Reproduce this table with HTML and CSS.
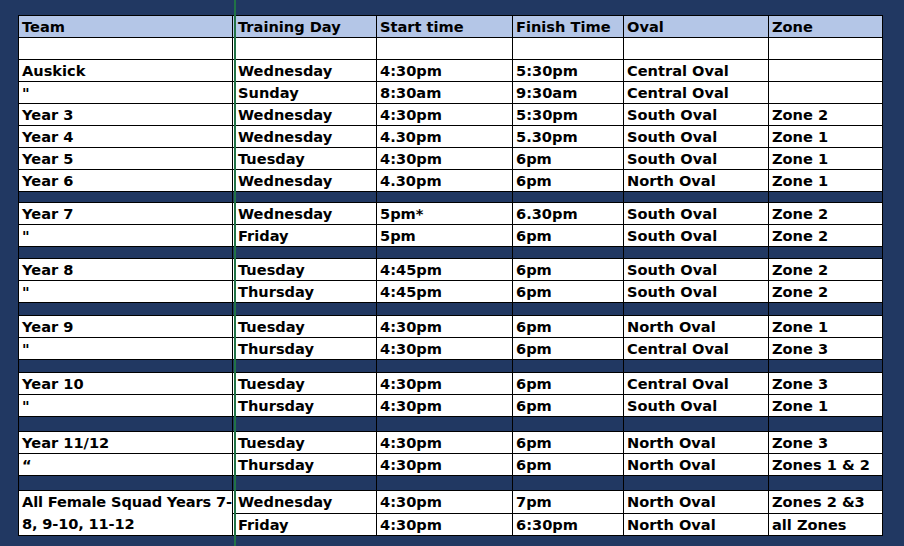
FILE: index.html
```html
<!DOCTYPE html>
<html lang="en">
<head>
<meta charset="utf-8">
<title>Training Schedule</title>
<link rel="stylesheet" href="styles.css">
</head>
<body>
<div class="sheet">
  <table class="schedule">
    <colgroup>
      <col class="c-team"><col class="c-day"><col class="c-start"><col class="c-finish"><col class="c-oval"><col class="c-zone">
    </colgroup>
    <thead>
      <tr class="head"><th>Team</th><th class="day">Training Day</th><th>Start time</th><th>Finish Time</th><th>Oval</th><th>Zone</th></tr>
    </thead>
    <tbody>
      <tr><td></td><td class="day"></td><td></td><td></td><td></td><td></td></tr>
      <tr><td>Auskick</td><td class="day">Wednesday</td><td>4:30pm</td><td>5:30pm</td><td>Central Oval</td><td></td></tr>
      <tr><td>"</td><td class="day">Sunday</td><td>8:30am</td><td>9:30am</td><td>Central Oval</td><td></td></tr>
      <tr><td>Year 3</td><td class="day">Wednesday</td><td>4:30pm</td><td>5:30pm</td><td>South Oval</td><td>Zone 2</td></tr>
      <tr><td>Year 4</td><td class="day">Wednesday</td><td>4.30pm</td><td>5.30pm</td><td>South Oval</td><td>Zone 1</td></tr>
      <tr><td>Year 5</td><td class="day">Tuesday</td><td>4:30pm</td><td>6pm</td><td>South Oval</td><td>Zone 1</td></tr>
      <tr><td>Year 6</td><td class="day">Wednesday</td><td>4.30pm</td><td>6pm</td><td>North Oval</td><td>Zone 1</td></tr>
      <tr class="sep sep-11"><td></td><td></td><td></td><td></td><td></td><td></td></tr>
      <tr><td>Year 7</td><td class="day">Wednesday</td><td>5pm*</td><td>6.30pm</td><td>South Oval</td><td>Zone 2</td></tr>
      <tr><td>"</td><td class="day">Friday</td><td>5pm</td><td>6pm</td><td>South Oval</td><td>Zone 2</td></tr>
      <tr class="sep sep-12"><td></td><td></td><td></td><td></td><td></td><td></td></tr>
      <tr><td>Year 8</td><td class="day">Tuesday</td><td>4:45pm</td><td>6pm</td><td>South Oval</td><td>Zone 2</td></tr>
      <tr><td>"</td><td class="day">Thursday</td><td>4:45pm</td><td>6pm</td><td>South Oval</td><td>Zone 2</td></tr>
      <tr class="sep sep-13"><td></td><td></td><td></td><td></td><td></td><td></td></tr>
      <tr><td>Year 9</td><td class="day">Tuesday</td><td>4:30pm</td><td>6pm</td><td>North Oval</td><td>Zone 1</td></tr>
      <tr><td>"</td><td class="day">Thursday</td><td>4:30pm</td><td>6pm</td><td>Central Oval</td><td>Zone 3</td></tr>
      <tr class="sep sep-13"><td></td><td></td><td></td><td></td><td></td><td></td></tr>
      <tr><td>Year 10</td><td class="day">Tuesday</td><td>4:30pm</td><td>6pm</td><td>Central Oval</td><td>Zone 3</td></tr>
      <tr><td>"</td><td class="day">Thursday</td><td>4:30pm</td><td>6pm</td><td>South Oval</td><td>Zone 1</td></tr>
      <tr class="sep sep-15"><td></td><td></td><td></td><td></td><td></td><td></td></tr>
      <tr><td>Year 11/12</td><td class="day">Tuesday</td><td>4:30pm</td><td>6pm</td><td>North Oval</td><td>Zone 3</td></tr>
      <tr><td>“</td><td class="day">Thursday</td><td>4:30pm</td><td>6pm</td><td>North Oval</td><td>Zones 1 &amp; 2</td></tr>
      <tr class="sep sep-15"><td></td><td></td><td></td><td></td><td></td><td></td></tr>
      <tr><td rowspan="2" class="wrap">All Female Squad Years 7-<br>8, 9-10, 11-12</td><td class="day">Wednesday</td><td>4:30pm</td><td>7pm</td><td>North Oval</td><td>Zones 2 &amp;3</td></tr>
      <tr><td class="day">Friday</td><td>4:30pm</td><td>6:30pm</td><td>North Oval</td><td>all Zones</td></tr>
    </tbody>
  </table>
  <div class="freeze-line"></div>
</div>
</body>
</html>
```

FILE: styles.css
```css
html, body {
  margin: 0;
  padding: 0;
  background: #213862;
  height: 100%;
}

.sheet {
  position: relative;
  width: 904px;
  height: 546px;
  overflow: hidden;
  padding: 15px 0 0 18px;
  box-sizing: border-box;
}

.schedule {
  border-collapse: collapse;
  table-layout: fixed;
  width: 864px;
  font-family: "DejaVu Sans", Verdana, sans-serif;
  font-weight: bold;
  font-size: 14.6px;
  color: #000;
}

.c-team { width: 214px; }
.c-day { width: 144px; }
.c-start { width: 136px; }
.c-finish { width: 111px; }
.c-oval { width: 145px; }
.c-zone { width: 114px; }

.schedule th,
.schedule td {
  border: 1px solid #000;
  background: #fff;
  height: 20px;
  padding: 1px 2px 0 3px;
  line-height: 20px;
  text-align: left;
  vertical-align: top;
  white-space: nowrap;
  overflow: hidden;
}

.schedule th {
  background: #b4c6e7;
  font-weight: bold;
}

.schedule .day {
  padding-left: 5px;
}

.schedule td.wrap {
  line-height: 22px;
  padding-top: 0;
  letter-spacing: -0.15px;
}

.schedule .sep td {
  background: #213862;
  padding: 0;
  line-height: 0;
}

.schedule .sep-11 td { height: 10px; }
.schedule .sep-12 td { height: 11px; }
.schedule .sep-13 td { height: 12px; }
.schedule .sep-15 td { height: 14px; }

.freeze-line {
  position: absolute;
  left: 234px;
  top: 0;
  width: 2px;
  height: 546px;
  background: #217346;
}
```
